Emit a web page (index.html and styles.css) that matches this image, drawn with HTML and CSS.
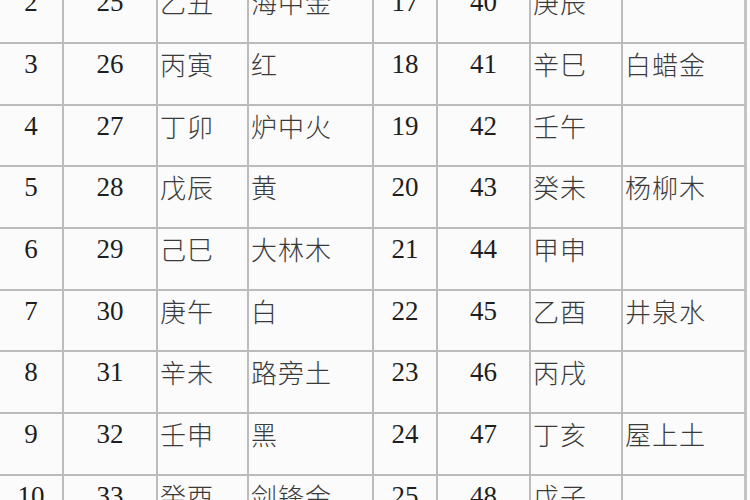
FILE: index.html
```html
<!DOCTYPE html>
<html lang="zh-CN">
<head>
<meta charset="utf-8">
<title>纳音表</title>
<link rel="stylesheet" href="styles.css">
</head>
<body>
<div class="sheet">
  <div class="c n">2</div><div class="c n">25</div><div class="c z">乙丑</div><div class="c z">海中金</div><div class="c n">17</div><div class="c n">40</div><div class="c z">庚辰</div><div class="c z last"></div>
  <div class="c n">3</div><div class="c n">26</div><div class="c z">丙寅</div><div class="c z">红</div><div class="c n">18</div><div class="c n">41</div><div class="c z">辛巳</div><div class="c z last">白蜡金</div>
  <div class="c n">4</div><div class="c n">27</div><div class="c z">丁卯</div><div class="c z">炉中火</div><div class="c n">19</div><div class="c n">42</div><div class="c z">壬午</div><div class="c z last"></div>
  <div class="c n">5</div><div class="c n">28</div><div class="c z">戊辰</div><div class="c z">黄</div><div class="c n">20</div><div class="c n">43</div><div class="c z">癸未</div><div class="c z last">杨柳木</div>
  <div class="c n">6</div><div class="c n">29</div><div class="c z">己巳</div><div class="c z">大林木</div><div class="c n">21</div><div class="c n">44</div><div class="c z">甲申</div><div class="c z last"></div>
  <div class="c n">7</div><div class="c n">30</div><div class="c z">庚午</div><div class="c z">白</div><div class="c n">22</div><div class="c n">45</div><div class="c z">乙酉</div><div class="c z last">井泉水</div>
  <div class="c n">8</div><div class="c n">31</div><div class="c z">辛未</div><div class="c z">路旁土</div><div class="c n">23</div><div class="c n">46</div><div class="c z">丙戌</div><div class="c z last"></div>
  <div class="c n">9</div><div class="c n">32</div><div class="c z">壬申</div><div class="c z">黑</div><div class="c n">24</div><div class="c n">47</div><div class="c z">丁亥</div><div class="c z last">屋上土</div>
  <div class="c n">10</div><div class="c n">33</div><div class="c z">癸酉</div><div class="c z">剑锋金</div><div class="c n">25</div><div class="c n">48</div><div class="c z">戊子</div><div class="c z last"></div>
</div>
</body>
</html>
```
FILE: styles.css
```css
html, body {
  margin: 0;
  padding: 0;
  background: #fbfbfb;
  overflow: hidden;
}
.sheet {
  display: grid;
  grid-template-columns: 64px 94px 91px 125px 64px 93px 92px 124px;
  grid-auto-rows: 61.7px;
  margin-top: -17.7px;
  width: 747px;
}
.c {
  box-sizing: border-box;
  border-right: 2px solid #bcbcbc;
  border-bottom: 2px solid #bcbcbc;
  padding-top: 5px;
  line-height: 30px;
  white-space: nowrap;
  overflow: hidden;
}
.c.last {
  border-right: 3px solid #c4c4c4;
}
.n {
  font-family: "Liberation Serif", "Times New Roman", serif;
  font-size: 27px;
  color: #1e1e1e;
  text-align: center;
}
.z {
  font-family: "Noto Sans CJK SC", "Noto Sans CJK TC", sans-serif;
  font-size: 26px;
  font-weight: 300;
  letter-spacing: 1px;
  color: #3a3a3a;
  padding-left: 2px;
}
```
